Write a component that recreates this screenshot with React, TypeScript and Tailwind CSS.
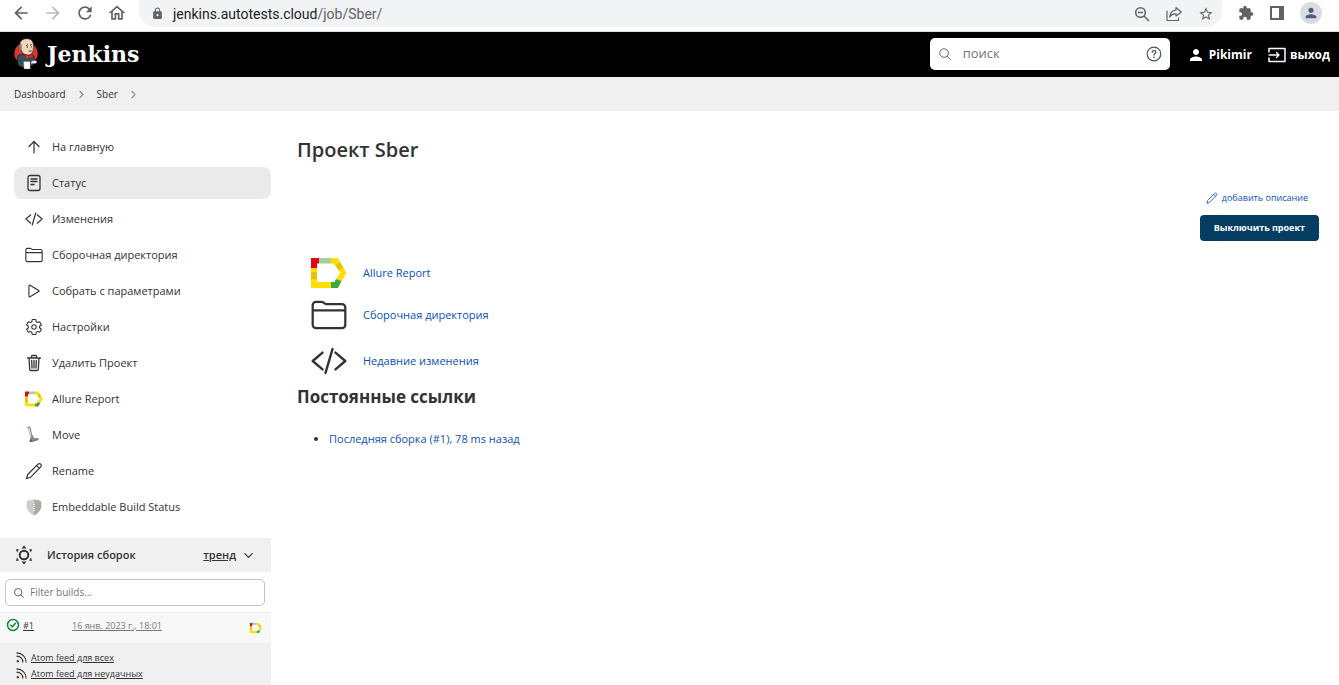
import React from "react";
import {
  MdArrowBack,
  MdArrowForward,
  MdRefresh,
  MdOutlineHome,
  MdLock,
  MdExtension,
  MdPerson,
  MdStarBorder,
} from "react-icons/md";
import {
  IoPlayOutline,
  IoSettingsOutline,
  IoSearchOutline,
  IoChevronForwardOutline,
  IoChevronDownOutline,
} from "react-icons/io5";

type IconProps = { className?: string };

const stroke = {
  fill: "none",
  stroke: "currentColor",
  strokeLinecap: "round" as const,
  strokeLinejoin: "round" as const,
};

function AllureIcon({ className }: IconProps) {
  return (
    <svg viewBox="0 0 36 32" className={className} aria-hidden="true">
      <path fill="#ffdf00" d="M0 10h6v15h14v6H0z" />
      <path fill="#ffdf00" d="M20 1h7l2.500 4.500-5 3.500-2-2.500H20z" />
      <path fill="#ffdf00" d="M32 10l3.500 6-5 8-5.500-2 4.200-6-1.700-3.500z" />
      <path fill="#e30613" d="M0 1h8v5.500H6V11H0z" />
      <path fill="#a3d09c" d="M8 1h12v5.500H8z" />
      <path fill="#dfc40c" d="M29 5l3.500 5.500-5 3-3-5z" />
      <path fill="#3fa83d" d="M25 22l5.500 2-3.500 7h-7v-6h3.500z" />
      <path fill="#dfc40c" d="M0 15h6v7H0z" />
    </svg>
  );
}

function UpIcon({ className }: IconProps) {
  return (
    <svg viewBox="0 0 18 18" className={className} aria-hidden="true" {...stroke} strokeWidth="1.200">
      <path d="M9 15V3.500M4 8.500l5-5 5 5" />
    </svg>
  );
}

function TrashIcon({ className }: IconProps) {
  return (
    <svg viewBox="0 0 18 18" className={className} aria-hidden="true" {...stroke} strokeWidth="1.300">
      <path d="M2.500 4h13M4 4l.700 11.300c0 .700.600 1.200 1.300 1.200h6c.700 0 1.200-.500 1.300-1.200L14 4M6.500 4V2.300c0-.500.300-.800.800-.800h3.400c.500 0 .800.300.800.800V4M9 6.500V14M6.700 6.500L7 14M11.300 6.500L11 14" />
    </svg>
  );
}

function FolderIcon({ className }: IconProps) {
  return (
    <svg viewBox="0 0 512 512" className={className} aria-hidden="true" {...stroke} strokeWidth="32">
      <path d="M440 444H72a48 48 0 01-48-48V116a48 48 0 0148-48h75.900a40 40 0 0122.200 6.700l27.800 18.600a40 40 0 0022.200 6.700H440a48 48 0 0148 48v248a48 48 0 01-48 48zM24 190h464" />
    </svg>
  );
}

function CodeIcon({ className }: IconProps) {
  return (
    <svg viewBox="0 0 512 512" className={className} aria-hidden="true" {...stroke} strokeWidth="34">
      <path d="M164 376L24 256l140-120M348 376l140-120-140-120M306 86l-100 340" />
    </svg>
  );
}

function StatusIcon({ className }: IconProps) {
  return (
    <svg viewBox="0 0 18 18" className={className} aria-hidden="true" {...stroke} strokeWidth="1.300">
      <rect x="3" y="1.500" width="12" height="15" rx="2" />
      <path d="M6 5h6M6 7.500h6M6 10.500h3" />
    </svg>
  );
}

function PencilIcon({ className }: IconProps) {
  return (
    <svg viewBox="0 0 18 18" className={className} aria-hidden="true" {...stroke} strokeWidth="1.200">
      <path d="M1.500 16.500l1.200-4L13 2.200a1.900 1.900 0 012.700 0 1.900 1.900 0 010 2.700L5.500 15.300zM11.600 3.600l2.800 2.800" />
    </svg>
  );
}

function MoveIcon({ className }: IconProps) {
  return (
    <svg viewBox="0 0 18 18" className={className} aria-hidden="true" fill="none">
      <path d="M3.500 2.500l1.800 8 .700 4" stroke="#a5a5a0" strokeWidth=".800" />
      <path d="M5 1.500l1.300 6 1.200 5" stroke="#77776f" strokeWidth="1" />
      <path d="M2.500 2.200L5 .800" stroke="#d84a4a" strokeWidth="1.200" />
      <path d="M5 13l2.500-4.500L9 12l5 .300-1 1.500-5 2H5z" fill="#8b8b83" />
      <circle cx="5.800" cy="14.800" r="1.200" fill="#555" />
      <path d="M7 15.300l6.500-1.800" stroke="#77776f" strokeWidth="1" />
    </svg>
  );
}

function ShieldIcon({ className }: IconProps) {
  return (
    <svg viewBox="0 0 18 18" className={className} aria-hidden="true">
      <path d="M9 1c1.500 1.300 3 1.500 4.500.800L16.500 4c-.700 1.500.300 3-.200 5C15.500 13 12.500 16 9 17.500z" fill="#a9aaa4" />
      <path d="M9 1C7.500 2.300 6 2.500 4.500 1.800L1.500 4c.700 1.500-.300 3 .200 5C2.500 13 5.500 16 9 17.500z" fill="#cbccc6" />
      <path d="M9 4v9" stroke="#e3e4df" strokeWidth="2" strokeDasharray="1 1" />
    </svg>
  );
}

function HelpIcon({ className }: IconProps) {
  return (
    <svg viewBox="0 0 16 16" className={className} aria-hidden="true" {...stroke} strokeWidth="1.200">
      <circle cx="8" cy="8" r="6.800" />
      <path d="M6.200 6.300c0-2.300 3.700-2.200 3.700-.100C9.900 7.500 8 7.600 8 9" strokeWidth="1.300" />
      <path d="M8 11.300v.100" strokeWidth="1.600" />
    </svg>
  );
}

function LogoutIcon({ className }: IconProps) {
  return (
    <svg viewBox="0 0 18 16" className={className} aria-hidden="true" {...stroke} strokeWidth="1.500">
      <path d="M1 5V1.500h16v13H1V11" />
      <path d="M1 8h10M8.500 5.500L11 8l-2.500 2.500" strokeWidth="1.300" />
    </svg>
  );
}

function FeedIcon({ className }: IconProps) {
  return (
    <svg viewBox="0 0 12 12" className={className} aria-hidden="true" {...stroke} strokeWidth="1.200">
      <path d="M1 1a10 10 0 0110 10M1 4.500A6.500 6.500 0 017.500 11" />
      <circle cx="1.800" cy="10" r=".800" fill="currentColor" strokeWidth="1" />
    </svg>
  );
}

function BuildHistoryIcon({ className }: IconProps) {
  return (
    <svg viewBox="0 0 18 20" className={className} aria-hidden="true" fill="currentColor">
      <circle cx="9" cy="10" r="4.300" fill="none" stroke="currentColor" strokeWidth="2" />
      <path d="M9 .500l2.500 3h-5zM9 19.500l2.500-3h-5zM1 4l3 .500L2 7.500zM17 4l-3 .500 2 3zM1 16l3-.500-2-3zM17 16l-3-.500 2-3z" />
    </svg>
  );
}

function SuccessIcon({ className }: IconProps) {
  return (
    <svg viewBox="0 0 14 14" className={className} aria-hidden="true" {...stroke} strokeWidth="1.500">
      <circle cx="7" cy="7" r="5.500" />
      <path d="M4.700 7.300l1.600 1.500L9.500 5.200" />
    </svg>
  );
}

function ZoomOutIcon({ className }: IconProps) {
  return (
    <svg viewBox="0 0 16 16" className={className} aria-hidden="true" {...stroke} strokeWidth="1.500">
      <circle cx="6.500" cy="6.500" r="4.800" />
      <path d="M10.200 10.200L14.500 14.500M4.500 6.500h4" />
    </svg>
  );
}

function ShareIcon({ className }: IconProps) {
  return (
    <svg viewBox="0 0 16 16" className={className} aria-hidden="true" {...stroke} strokeWidth="1.200">
      <path d="M1 5v9.500h11.500V12" />
      <path d="M10 1.500L15.300 6 10 10V7.800C7 7.800 5 9 3.800 11 4.200 7 6.500 4.500 10 4z" />
    </svg>
  );
}

function PanelIcon({ className }: IconProps) {
  return (
    <svg viewBox="0 0 14 14" className={className} aria-hidden="true">
      <rect x="1" y="1" width="12" height="12" fill="none" stroke="currentColor" strokeWidth="2" />
      <path d="M9 1h4v12H9z" fill="currentColor" />
    </svg>
  );
}

function JenkinsMark({ className }: IconProps) {
  return (
    <svg viewBox="0 0 24 32" className={className} aria-hidden="true">
      <ellipse cx="12" cy="15.500" rx="11.700" ry="11" fill="#d33833" />
      <path d="M4 17.500l5-1.500 5 2.500 5-1c2 2 2.500 5.500 2 8l-3 2-6 2c-4 0-7-1-8-3C3.500 24 3.300 20.500 4 17.500z" fill="#335061" stroke="#111" strokeWidth=".700" />
      <path d="M5.500 7C6 2.500 9 .700 13 .700c4.500 0 6.500 3 6.500 7.300 0 5-1 8.500-5 9-3.500.300-6-1.500-7-4.500C5 11.500 4.800 9 5.500 7z" fill="#f0d6b7" stroke="#231f20" strokeWidth=".600" />
      <path d="M6.500 4.500C5 7 5.500 11 7.500 12.500l.500-3L7.500 6z" fill="#8a8580" />
      <path d="M12 7.500l2-.700M16 7l2-.300" stroke="#231f20" strokeWidth=".800" />
      <circle cx="13.300" cy="9" r=".700" fill="#231f20" />
      <circle cx="17.300" cy="8.800" r=".600" fill="#231f20" />
      <path d="M14 13c2-1.300 3-1 4.500 0-1.300 1.300-3 1.300-4.500 0z" fill="#6d6b6d" />
      <path d="M11 16.500l4 1.500 3.500-2 .500 4-3.500-.500-4 2z" fill="#d33833" stroke="#5a1010" strokeWidth=".500" />
      <path d="M9.500 23.500h6.500l.200 7.500H10z" fill="#fff" stroke="#666" strokeWidth=".400" />
      <path d="M17 23.500c2.500-1.500 5.500-1.200 6 .300.300 1.500-2 2.200-3.500 1.700L17 26z" fill="#f3f3f3" stroke="#333" strokeWidth=".500" />
    </svg>
  );
}

const tasks = [
  { label: "На главную", Icon: UpIcon },
  { label: "Статус", Icon: StatusIcon, active: true },
  { label: "Изменения", Icon: CodeIcon },
  { label: "Сборочная директория", Icon: FolderIcon },
  { label: "Собрать с параметрами", Icon: IoPlayOutline },
  { label: "Настройки", Icon: IoSettingsOutline },
  { label: "Удалить Проект", Icon: TrashIcon },
  { label: "Allure Report", Icon: AllureIcon },
  { label: "Move", Icon: MoveIcon },
  { label: "Rename", Icon: PencilIcon },
  { label: "Embeddable Build Status", Icon: ShieldIcon },
];

function BrowserBar() {
  return (
    <div className="flex h-8 items-start border-b border-[#dcdee0] bg-white pl-[11px] text-[#5f6368]">
      <div className="flex h-[26px] items-center gap-3">
        <button aria-label="Back"><MdArrowBack className="size-5" /></button>
        <button aria-label="Forward" className="text-[#babcbe]"><MdArrowForward className="size-5" /></button>
        <button aria-label="Reload"><MdRefresh className="size-5" /></button>
        <button aria-label="Home"><MdOutlineHome className="size-5" /></button>
      </div>
      <div className="ml-3 flex h-[27px] grow items-center rounded-b-2xl bg-[#f1f3f4] pr-2 pl-3">
        <MdLock className="size-[13px] shrink-0" />
        <div className="ml-[9px] grow font-['Roboto',sans-serif] text-sm text-[#202124]">
          jenkins.autotests.cloud<span className="text-[#5f6368]">/job/Sber/</span>
        </div>
        <div className="flex items-center gap-4">
          <button aria-label="Zoom"><ZoomOutIcon className="size-4" /></button>
          <button aria-label="Share"><ShareIcon className="size-4" /></button>
          <button aria-label="Bookmark"><MdStarBorder className="size-4" /></button>
        </div>
      </div>
      <div className="flex h-[26px] items-center gap-4 pr-[17px] pl-4">
        <button aria-label="Extensions"><MdExtension className="size-4" /></button>
        <button aria-label="Side panel"><PanelIcon className="size-[14px]" /></button>
        <button aria-label="Profile" className="rounded-full bg-[#dadce0] p-[3px] text-[#4a5f7f]">
          <MdPerson className="size-4" />
        </button>
      </div>
    </div>
  );
}

function Header() {
  return (
    <header className="flex h-[45px] items-center bg-black pr-[9px] pb-[2px] pl-[14px] text-white">
      <a href="#" className="flex items-center gap-[9px]">
        <JenkinsMark className="h-8 w-6" />
        <span className="font-['DejaVu_Serif','Liberation_Serif',serif] text-[22px] leading-8 font-bold">Jenkins</span>
      </a>
      <div className="ml-auto flex h-8 w-60 items-center rounded-[5px] bg-white px-2 text-[#4d545d]">
        <IoSearchOutline className="size-[14px] shrink-0" />
        <input aria-label="поиск" placeholder="поиск" className="ml-[11px] w-0 grow text-[13px] outline-none placeholder:text-[#757575]" />
        <button aria-label="Help"><HelpIcon className="size-4" /></button>
      </div>
      <a href="#" className="ml-[17px] flex items-center gap-1 pt-[2px] text-xs font-bold">
        <MdPerson className="size-[18px]" />
        Pikimir
      </a>
      <a href="#" className="ml-4 flex items-center gap-1 pt-[2px] text-xs font-bold">
        <LogoutIcon className="h-4 w-[18px]" />
        выход
      </a>
    </header>
  );
}

function Sidebar() {
  return (
    <aside className="w-[271px] shrink-0">
      <nav className="flex flex-col gap-1 pt-5 pb-[15px] pl-[14px]">
        {tasks.map(({ label, Icon, active }) => (
          <a
            key={label}
            href="#"
            className={`flex h-8 items-center gap-[9px] rounded-lg pl-[11px] text-[11px] ${active ? "bg-[#eaeaea]" : ""}`}
          >
            <Icon className="size-[18px] shrink-0" />
            <span className="pt-px">{label}</span>
          </a>
        ))}
      </nav>
      <section>
        <div className="flex h-[34px] items-center bg-[#f0f0f0] pr-4 pl-[15px]">
          <BuildHistoryIcon className="h-5 w-[18px]" />
          <h2 className="ml-[14px] grow text-[11px] font-semibold">История сборок</h2>
          <a href="#" className="text-[11px] font-semibold underline">тренд</a>
          <button aria-label="Свернуть" className="ml-[6px]"><IoChevronDownOutline className="size-[13px]" /></button>
        </div>
        <div className="px-[5px] pt-[7px] pb-[6px]">
          <div className="flex h-[27px] w-[260px] items-center gap-[5px] rounded-[5px] border border-[#bcc4cc] px-[7px]">
            <IoSearchOutline className="size-3 shrink-0" />
            <input aria-label="Filter builds" placeholder="Filter builds..." className="w-0 grow text-[10px] outline-none placeholder:text-[#757575]" />
          </div>
        </div>
        <table className="w-full bg-[#f8f8f8] text-[9px]">
          <tbody>
            <tr className="h-[30px] border-t border-[#ececec]">
              <td className="w-[72px] pb-[5px] pl-[6px]">
                <a href="#" className="flex items-center gap-[3px] underline">
                  <SuccessIcon className="size-[14px] text-[#138a38]" />
                  #1
                </a>
              </td>
              <td className="pb-[5px]"><a href="#" className="text-[#777] underline">16 янв. 2023 г., 18:01</a></td>
              <td className="w-[21px]">
                <a href="#" aria-label="Allure Report"><AllureIcon className="size-3" /></a>
              </td>
            </tr>
          </tbody>
        </table>
        <div className="flex flex-col bg-[#f0f0f0] pt-[7px] pb-1 pl-4 text-[9px] leading-4">
          <a href="#" className="flex items-center gap-1 underline"><FeedIcon className="size-[11px]" />Atom feed для всех</a>
          <a href="#" className="flex items-center gap-1 underline"><FeedIcon className="size-[11px]" />Atom feed для неудачных</a>
        </div>
      </section>
    </aside>
  );
}

function Main() {
  return (
    <main className="grow pt-[25px] pr-5 pl-[26px]">
      <h1 className="text-xl leading-7 font-semibold">Проект Sber</h1>
      <div className="mt-[26px] flex flex-col items-end gap-[9px]">
        <a href="#" className="mr-[11px] flex h-4 items-center gap-1 text-[9px] text-[#0b50b8]">
          <PencilIcon className="size-3" />
          добавить описание
        </a>
        <button className="h-[26px] rounded-[4px] bg-[#063e63] px-[14px] text-[9px] font-bold text-white">
          Выключить проект
        </button>
      </div>
      <div className="mt-[14px] flex flex-col pl-[14px] text-[11px] text-[#0b50b8]">
        <a href="#" className="flex h-9 items-center gap-4"><AllureIcon className="size-9" />Allure Report</a>
        <a href="#" className="flex h-12 items-center gap-4"><FolderIcon className="size-9 text-[#333]" />Сборочная директория</a>
        <a href="#" className="flex h-11 items-center gap-4"><CodeIcon className="size-9 text-[#333]" />Недавние изменения</a>
      </div>
      <h2 className="mt-[2px] text-[17px] leading-6 font-bold">Постоянные ссылки</h2>
      <ul className="mt-[22px] list-disc pl-8 text-[11px]">
        <li><a href="#" className="text-[#0b50b8]">Последняя сборка (#1), 78 ms назад</a></li>
      </ul>
    </main>
  );
}

export default function App() {
  return (
    <div className="min-h-screen bg-white font-['Open_Sans','Noto_Sans',sans-serif] text-[#333]">
      <BrowserBar />
      <Header />
      <nav aria-label="breadcrumb" className="flex h-[34px] items-center gap-[10px] bg-[#f0f0f0] pl-[14px] text-[10px]">
        <a href="#">Dashboard</a>
        <IoChevronForwardOutline className="size-[11px] text-[#777]" />
        <a href="#">Sber</a>
        <IoChevronForwardOutline className="size-[11px] text-[#777]" />
      </nav>
      <div className="flex">
        <Sidebar />
        <Main />
      </div>
    </div>
  );
}
